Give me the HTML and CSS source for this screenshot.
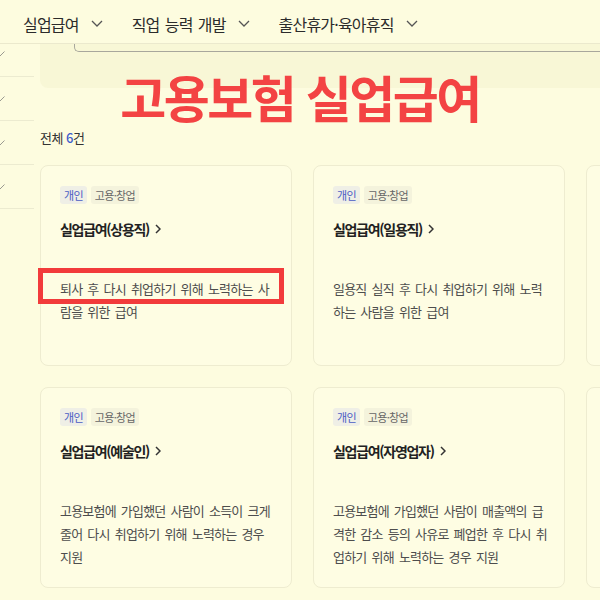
FILE: index.html
```html
<!DOCTYPE html>
<html lang="ko">
<head>
<meta charset="utf-8">
<title>고용보험 실업급여</title>
<link rel="stylesheet" href="styles.css">
</head>
<body>
<header class="nav">
  <div class="nav-item"><span>실업급여</span><svg class="dd" width="12" height="7" viewBox="0 0 12 7"><path d="M1 1l5 5 5-5"/></svg></div>
  <div class="nav-item"><span>직업 능력 개발</span><svg class="dd" width="12" height="7" viewBox="0 0 12 7"><path d="M1 1l5 5 5-5"/></svg></div>
  <div class="nav-item"><span>출산휴가·육아휴직</span><svg class="dd" width="12" height="7" viewBox="0 0 12 7"><path d="M1 1l5 5 5-5"/></svg></div>
</header>
<div class="layout">
  <aside class="sidebar">
    <div class="side-item first"><svg class="sv" width="10" height="6" viewBox="0 0 10 6"><path d="M0.5 0.5l4.5 4.5 4.5-4.5"/></svg></div>
    <div class="side-item"><svg class="sv" width="10" height="6" viewBox="0 0 10 6"><path d="M0.5 0.5l4.5 4.5 4.5-4.5"/></svg></div>
    <div class="side-item"><svg class="sv" width="10" height="6" viewBox="0 0 10 6"><path d="M0.5 0.5l4.5 4.5 4.5-4.5"/></svg></div>
    <div class="side-item"><svg class="sv" width="10" height="6" viewBox="0 0 10 6"><path d="M0.5 0.5l4.5 4.5 4.5-4.5"/></svg></div>
  </aside>
  <main class="main">
    <div class="panel"><div class="search"></div></div>
    <p class="total">전체 <b>6</b>건</p>
    <div class="grid">
      <article class="card">
        <div class="tags"><span class="tag blue">개인</span><span class="tag gray">고용·창업</span></div>
        <h3 class="card-title">실업급여(상용직)<svg class="arr" width="6" height="10" viewBox="0 0 6 10"><path d="M1 1l4 4-4 4"/></svg></h3>
        <p class="desc">퇴사 후 다시 취업하기 위해 노력하는 사<br>람을 위한 급여</p>
        <div class="mark"></div>
      </article>
      <article class="card">
        <div class="tags"><span class="tag blue">개인</span><span class="tag gray">고용·창업</span></div>
        <h3 class="card-title">실업급여(일용직)<svg class="arr" width="6" height="10" viewBox="0 0 6 10"><path d="M1 1l4 4-4 4"/></svg></h3>
        <p class="desc">일용직 실직 후 다시 취업하기 위해 노력<br>하는 사람을 위한 급여</p>
      </article>
      <article class="card" aria-hidden="true"></article>
      <article class="card">
        <div class="tags"><span class="tag blue">개인</span><span class="tag gray">고용·창업</span></div>
        <h3 class="card-title">실업급여(예술인)<svg class="arr" width="6" height="10" viewBox="0 0 6 10"><path d="M1 1l4 4-4 4"/></svg></h3>
        <p class="desc">고용보험에 가입했던 사람이 소득이 크게<br>줄어 다시 취업하기 위해 노력하는 경우<br>지원</p>
      </article>
      <article class="card">
        <div class="tags"><span class="tag blue">개인</span><span class="tag gray">고용·창업</span></div>
        <h3 class="card-title">실업급여(자영업자)<svg class="arr" width="6" height="10" viewBox="0 0 6 10"><path d="M1 1l4 4-4 4"/></svg></h3>
        <p class="desc">고용보험에 가입했던 사람이 매출액의 급<br>격한 감소 등의 사유로 폐업한 후 다시 취<br>업하기 위해 노력하는 경우 지원</p>
      </article>
      <article class="card" aria-hidden="true"></article>
    </div>
  </main>
</div>
<div class="headline">고용보험 실업급여</div>
</body>
</html>
```

FILE: styles.css
```css
* { box-sizing: border-box; }
html, body { margin: 0; padding: 0; }
body {
  width: 600px;
  height: 600px;
  overflow: hidden;
  position: relative;
  background: #fdfcdf;
  font-family: "Noto Sans CJK KR", "Noto Sans", sans-serif;
  color: #222;
}
.nav {
  height: 44px;
  border-bottom: 1px solid #ebe9cd;
  display: flex;
  align-items: center;
  padding: 4px 0 0 23px;
  gap: 29px;
}
.nav-item {
  display: flex;
  align-items: center;
  font-size: 16px;
  letter-spacing: -0.8px;
  word-spacing: 1.5px;
  color: #2b2b2b;
  white-space: nowrap;
}
.dd { margin-left: 12px; }
.dd path { fill: none; stroke: #555; stroke-width: 1.3; }
.layout { display: flex; }
.sidebar { width: 34px; flex: none; }
.side-item {
  height: 44px;
  border-bottom: 1px solid #ecebd0;
  display: flex;
  align-items: center;
  overflow: hidden;
}
.side-item.first {
  height: 33px;
  align-items: flex-start;
  padding-top: 7px;
}
.sv { margin-left: -5px; flex: none; }
.sv path { fill: none; stroke: #9a9a90; stroke-width: 1; }
.main { margin-left: 6px; flex: 1; min-width: 0; }
.panel {
  height: 44px;
  background: #f8f7d6;
  border-bottom-left-radius: 8px;
  padding-left: 34px;
}
.search {
  height: 8px;
  border: 1px solid #a8a79c;
  border-top: 0;
  border-right: 0;
  border-bottom-left-radius: 5px;
}
.total {
  margin: 41px 0 0;
  font-size: 13px;
  line-height: 18px;
  color: #333;
  letter-spacing: -0.5px;
}
.total b { color: #3d5ccc; font-weight: 500; }
.grid {
  margin-top: 18px;
  display: grid;
  grid-template-columns: repeat(3, 252px);
  grid-auto-rows: 201px;
  gap: 21px;
}
.card {
  border: 1px solid #eeecd0;
  border-radius: 8px;
  background: #fefde3;
  padding: 20px 19px;
  position: relative;
}
.tags { display: flex; gap: 4px; }
.tag {
  height: 18px;
  line-height: 18px;
  padding: 0 4px;
  font-size: 11px;
  border-radius: 3px;
  letter-spacing: -0.7px;
}
.tag.blue { background: #efefe6; color: #4b5cc4; }
.tag.gray { background: #f4f3dc; color: #666; }
.card-title {
  margin: 15px 0 0;
  font-size: 14px;
  font-weight: 700;
  line-height: 20px;
  letter-spacing: -1.3px;
  color: #222;
  display: flex;
  align-items: center;
}
.arr { margin-left: 6px; }
.arr path { fill: none; stroke: #333; stroke-width: 1.5; }
.desc {
  margin: 38px 0 0;
  font-size: 13px;
  line-height: 23px;
  letter-spacing: -0.8px;
  word-spacing: 2.2px;
  color: #4d4d4d;
  white-space: nowrap;
}
.mark {
  position: absolute;
  left: -3px;
  top: 102px;
  width: 246px;
  height: 36px;
  border: 5px solid #f23b3b;
}
.headline {
  position: absolute;
  top: 71px;
  left: 0;
  right: 0;
  text-align: center;
  font-size: 50px;
  line-height: 50px;
  font-weight: 700;
  color: #f34343;
  letter-spacing: -2.5px;
}
```
